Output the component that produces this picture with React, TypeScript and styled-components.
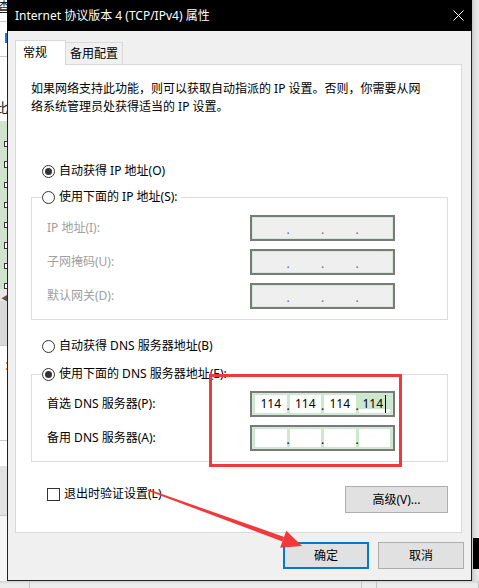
import React from 'react'
import styled, { createGlobalStyle } from 'styled-components'

const UI_FONT = `"Noto Sans", "Noto Sans CJK SC", sans-serif`

const GlobalStyle = createGlobalStyle`
  html, body {
    margin: 0;
    padding: 0;
    background: #f0f0f0;
  }
  body {
    font-family: ${UI_FONT};
    font-size: 12px;
    color: #000;
  }
  * { box-sizing: border-box; }
`

const Desktop = styled.div`
  position: relative;
  width: 479px;
  height: 588px;
  overflow: hidden;
  display: grid;
  grid-template-columns: 7px 465px 7px;
  grid-template-rows: 581px 7px;
  background: #f3f3f3;
`

/* ---- bits of the app behind the dialog ---- */
const LeftStrip = styled.div`
  display: flex;
  flex-direction: column;
  overflow: hidden;
  background: #fff;
`

const StripBlock = styled.div<{ $h: number; $bg?: string; $line?: boolean }>`
  flex: none;
  height: ${p => p.$h}px;
  background: ${p => p.$bg || '#fff'};
  border-bottom: ${p => (p.$line ? '1px solid #c9c9c9' : 'none')};
  overflow: hidden;
  font-size: 14px;
  line-height: 14px;
  white-space: nowrap;
  color: #222;
`

const GreenList = styled.div`
  flex: none;
  height: 168px;
  background: #cfe3cd;
  display: flex;
  flex-direction: column;
  gap: 14px;
  padding: 20px 0 0 4px;
`

const ListIcon = styled.span`
  width: 4px;
  height: 7px;
  border: 1px solid #333;
  border-right: none;
  background: #fff;
`

const RightStrip = styled.div`
  display: flex;
  flex-direction: column;
  background: linear-gradient(to right, #c6c6c6, #dedede 3px, #ececec);
`

const DarkPatch = styled.div`
  margin: 538px 0 0 1px;
  height: 31px;
  background: #000;
`

const BottomStrip = styled.div`
  grid-column: 1 / 4;
  display: flex;
  background: linear-gradient(to bottom, #d2d2d2, #ececec 3px);
`

const BottomCell = styled.div<{ $w?: number }>`
  flex: ${p => (p.$w ? 'none' : '1')};
  width: ${p => (p.$w ? `${p.$w}px` : 'auto')};
  border-right: 1px solid #c4c4c4;
`

/* ---- the dialog ---- */
const Window = styled.div`
  display: flex;
  flex-direction: column;
  background: #f0f0f0;
  border: 1px solid #222;
  border-top: none;
`

const TitleBar = styled.div`
  height: 31px;
  flex: none;
  background: #000;
  color: #fff;
  display: flex;
  align-items: center;
  justify-content: space-between;
  padding-left: 8px;
  margin: 0 -1px;
  line-height: 16px;
  font-size: 12px;
`

const CloseButton = styled.div`
  width: 28px;
  height: 31px;
  display: flex;
  align-items: center;
  justify-content: center;
  padding-bottom: 1px;
`

const Body = styled.div`
  flex: 1;
  display: flex;
  flex-direction: column;
  padding: 9px 7px 0 7px;
`

const TabRow = styled.div`
  display: flex;
  align-items: flex-end;
  height: 24px;
`

const Tab = styled.div<{ $active?: boolean }>`
  position: relative;
  z-index: ${p => (p.$active ? 1 : 0)};
  height: ${p => (p.$active ? 25 : 22)}px;
  margin-bottom: ${p => (p.$active ? -1 : 0)}px;
  width: ${p => (p.$active ? 51 : 57)}px;
  padding-left: ${p => (p.$active ? 7 : 4)}px;
  padding-top: ${p => (p.$active ? 3 : 2)}px;
  background: ${p => (p.$active ? '#fff' : '#f0f0f0')};
  border: 1px solid #d9d9d9;
  border-bottom: none;
  border-left: ${p => (p.$active ? '1px solid #d9d9d9' : 'none')};
  line-height: 18px;
  white-space: nowrap;
`

const Panel = styled.div`
  width: 447px;
  height: 469px;
  flex: none;
  background: #fff;
  border: 1px solid #d9d9d9;
  padding: 15px 13px 0 15px;
  display: flex;
  flex-direction: column;
`

const Description = styled.p`
  margin: 0;
  line-height: 18px;
  white-space: nowrap;
`

const RadioRow = styled.div<{ $top: number }>`
  display: flex;
  align-items: center;
  gap: 4px;
  height: 16px;
  line-height: 16px;
  margin: ${p => p.$top}px 0 0 11px;
  white-space: nowrap;
`

const RadioDot = styled.span<{ $checked?: boolean }>`
  flex: none;
  width: 13px;
  height: 13px;
  border-radius: 50%;
  border: 1px solid #333;
  background: #fff;
  display: flex;
  align-items: center;
  justify-content: center;
  &::after {
    content: '';
    width: 7px;
    height: 7px;
    border-radius: 50%;
    background: #333;
    display: ${p => (p.$checked ? 'block' : 'none')};
  }
`

const GroupBox = styled.div<{ $top: number }>`
  margin-top: ${p => p.$top}px;
  border: 1px solid #dcdcdc;
  padding: 0 0 10px 15px;
`

const Legend = styled.div`
  display: flex;
  align-items: center;
  gap: 4px;
  height: 16px;
  line-height: 16px;
  width: fit-content;
  margin: -9px 0 0 -5px;
  padding-right: 3px;
  background: #fff;
  white-space: nowrap;
`

const FieldGrid = styled.div<{ $top: number }>`
  display: grid;
  grid-template-columns: 203px 145px;
  row-gap: 8px;
  align-items: center;
  margin-top: ${p => p.$top}px;
`

const FieldLabel = styled.span<{ $disabled?: boolean }>`
  color: ${p => (p.$disabled ? '#a0a0a0' : '#000')};
  line-height: 16px;
  white-space: nowrap;
`

const IpBox = styled.div<{ $disabled?: boolean }>`
  display: flex;
  width: 145px;
  height: 26px;
  border: 2px solid #7a7a7a;
  padding: 2px 3px;
  background: ${p => (p.$disabled ? '#efefef' : '#cce8cf')};
  box-shadow: inset 0 0 0 1px #d4e9d6;
`

const IpPart = styled.span<{ $disabled?: boolean; $selected?: boolean }>`
  flex: 1;
  display: flex;
  align-items: center;
  justify-content: center;
  line-height: 18px;
  font-family: "Noto Sans", sans-serif;
  font-size: 12px;
  background: ${p =>
    p.$disabled
      ? 'transparent'
      : p.$selected
      ? 'linear-gradient(to bottom, #cce8cf 14px, #fff 14px, #fff 18px)'
      : '#fff'};
`

const IpDot = styled.span<{ $disabled?: boolean }>`
  flex: none;
  width: 3px;
  display: flex;
  justify-content: center;
  align-items: flex-end;
  line-height: 14px;
  font-size: 12px;
  color: ${p => (p.$disabled ? '#6a6a8a' : '#000')};
`

const Caret = styled.span`
  width: 1px;
  height: 18px;
  margin-left: 2px;
  background: #000;
`

const Footer = styled.div`
  margin-top: 24px;
  width: 417px;
  display: flex;
  justify-content: space-between;
  align-items: flex-start;
  padding-left: 16px;
`

const CheckRow = styled.div`
  display: flex;
  align-items: center;
  gap: 4px;
  height: 16px;
  line-height: 16px;
  white-space: nowrap;
`

const CheckBox = styled.span`
  width: 13px;
  height: 13px;
  border: 1px solid #333;
  background: #fff;
`

const Button = styled.button<{ $primary?: boolean; $w: number }>`
  width: ${p => p.$w}px;
  height: 27px;
  padding: 0;
  background: #e1e1e1;
  border: ${p => (p.$primary ? '2px solid #0078d7' : '1px solid #adadad')};
  font-family: ${UI_FONT};
  font-size: 12px;
  color: #000;
  line-height: 16px;
`

const ButtonRow = styled.div`
  margin-top: 9px;
  display: flex;
  justify-content: flex-end;
  gap: 9px;
`

/* ---- annotations drawn over the screenshot ---- */
const Highlight = styled.div`
  position: absolute;
  left: 209px;
  top: 374px;
  width: 193px;
  height: 93px;
  border: 3px solid #f0393b;
  pointer-events: none;
`

const ArrowLayer = styled.svg`
  position: absolute;
  left: 0;
  top: 0;
  pointer-events: none;
`

type IpProps = { values?: string[]; disabled?: boolean; caret?: boolean }

function IpField({ values = ['', '', '', ''], disabled, caret }: IpProps) {
  return (
    <IpBox $disabled={disabled}>
      {values.map((v, i) => (
        <React.Fragment key={i}>
          {i > 0 && <IpDot $disabled={disabled}>.</IpDot>}
          <IpPart $disabled={disabled} $selected={caret && i === 3}>
            {v}
            {caret && i === 3 && <Caret />}
          </IpPart>
        </React.Fragment>
      ))}
    </IpBox>
  )
}

export default function App() {
  const dns = ['114', '114', '114', '114']
  return (
    <>
      <GlobalStyle />
      <Desktop>
        <LeftStrip>
          <StripBlock $h={22} $line>
            <span style={{ marginLeft: -3 }}>查</span>
          </StripBlock>
          <StripBlock $h={35} $line>
            <div style={{ margin: '11px 0 0 5px', width: 2, height: 10, background: '#2a6fc9' }} />
          </StripBlock>
          <StripBlock $h={64}>
            <div style={{ marginTop: 44, marginLeft: -6 }}>此</div>
          </StripBlock>
          <GreenList>
            {Array.from({ length: 8 }).map((_, i) => (
              <ListIcon key={i} />
            ))}
          </GreenList>
          <StripBlock $h={12} $bg="#e6e6e6">
            <span style={{ fontSize: 8, marginLeft: 1, color: '#555' }}>◀</span>
          </StripBlock>
          <StripBlock $h={45} $bg="#dadada" $line />
          <StripBlock $h={95} $line>
            <span style={{ display: 'block', marginTop: 12, marginLeft: 5, color: '#c87010' }}>:</span>
          </StripBlock>
          <StripBlock $h={25} />
          <StripBlock $h={50} $bg="#e2e2e2" $line />
          <StripBlock $h={68} $bg="#f5f5f5" />
        </LeftStrip>

        <Window>
          <TitleBar>
            <span>Internet 协议版本 4 (TCP/IPv4) 属性</span>
            <CloseButton>
              <svg width="11" height="11" viewBox="0 0 11 11">
                <path d="M0.5 0.5 L10.5 10.5 M10.5 0.5 L0.5 10.5" stroke="#fff" strokeWidth="1" />
              </svg>
            </CloseButton>
          </TitleBar>
          <Body>
            <TabRow>
              <Tab $active>常规</Tab>
              <Tab>备用配置</Tab>
            </TabRow>
            <Panel>
              <Description>
                如果网络支持此功能，则可以获取自动指派的 IP 设置。否则，你需要从网
                <br />
                络系统管理员处获得适当的 IP 设置。
              </Description>

              <RadioRow $top={47}>
                <RadioDot $checked />
                自动获得 IP 地址(O)
              </RadioRow>

              <GroupBox $top={18}>
                <Legend>
                  <RadioDot />
                  使用下面的 IP 地址(S):
                </Legend>
                <FieldGrid $top={10}>
                  <FieldLabel $disabled>IP 地址(I):</FieldLabel>
                  <IpField disabled />
                  <FieldLabel $disabled>子网掩码(U):</FieldLabel>
                  <IpField disabled />
                  <FieldLabel $disabled>默认网关(D):</FieldLabel>
                  <IpField disabled />
                </FieldGrid>
              </GroupBox>

              <RadioRow $top={18}>
                <RadioDot />
                自动获得 DNS 服务器地址(B)
              </RadioRow>

              <GroupBox $top={20}>
                <Legend>
                  <RadioDot $checked />
                  使用下面的 DNS 服务器地址(E):
                </Legend>
                <FieldGrid $top={9}>
                  <FieldLabel>首选 DNS 服务器(P):</FieldLabel>
                  <IpField values={dns} caret />
                  <FieldLabel>备用 DNS 服务器(A):</FieldLabel>
                  <IpField />
                </FieldGrid>
              </GroupBox>

              <Footer>
                <CheckRow>
                  <CheckBox />
                  退出时验证设置(L)
                </CheckRow>
                <Button $w={103}>高级(V)...</Button>
              </Footer>
            </Panel>

            <ButtonRow>
              <Button $primary $w={86}>确定</Button>
              <Button $w={86}>取消</Button>
            </ButtonRow>
          </Body>
        </Window>

        <RightStrip>
          <DarkPatch />
        </RightStrip>

        <BottomStrip>
          <BottomCell $w={30} />
          <BottomCell $w={332} />
          <BottomCell $w={15} />
          <BottomCell />
        </BottomStrip>

        <Highlight />
        <ArrowLayer width="479" height="588" viewBox="0 0 479 588">
          <polygon
            points="147.7,490.7 148.3,489.3 284.1,536.9 282.4,541.6"
            fill="#f0393b"
          />
          <polygon points="302,546 280.1,547.7 286.3,530.7" fill="#f0393b" />
        </ArrowLayer>
      </Desktop>
    </>
  )
}
